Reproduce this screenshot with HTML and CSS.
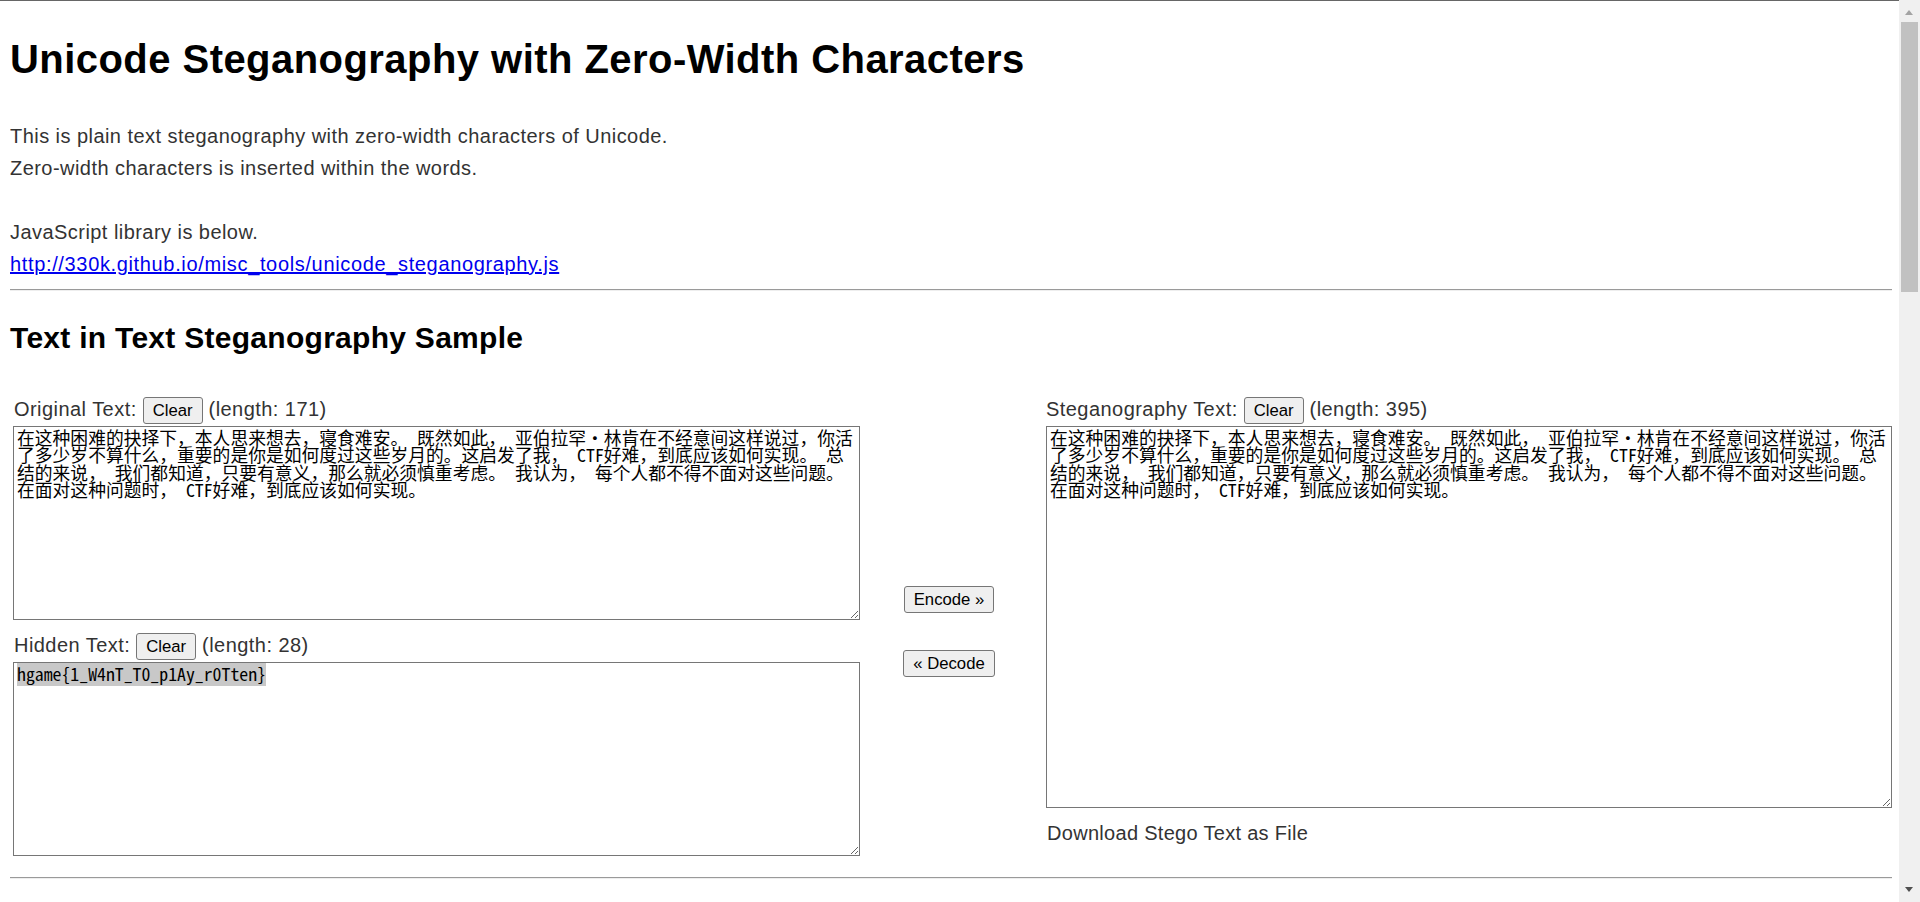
FILE: index.html
```html
<!DOCTYPE html>
<html lang="en">
<head>
<meta charset="utf-8">
<title>Unicode Steganography with Zero-Width Characters</title>
<link rel="stylesheet" href="styles.css">
</head>
<body>
<h1 class="title">Unicode Steganography with Zero-Width Characters</h1>
<p class="intro">This is plain text steganography with zero-width characters of Unicode.<br>Zero-width characters is inserted within the words.<br><br>JavaScript library is below.<br><a class="lib-link" href="http://330k.github.io/misc_tools/unicode_steganography.js">http://330k.github.io/misc_tools/unicode_steganography.js</a></p>
<hr class="rule">
<h2 class="section-title">Text in Text Steganography Sample</h2>
<div class="stego">
  <div class="cell cell-original">
    <div class="label-row"><span class="label">Original Text:</span><button class="btn btn-clear" type="button">Clear</button><span class="label">(length: 171)</span></div>
    <textarea class="ta ta-short" id="original">在这种困难的抉择下，本人思来想去，寝食难安。 既然如此， 亚伯拉罕·林肯在不经意间这样说过，你活了多少岁不算什么，重要的是你是如何度过这些岁月的。这启发了我， CTF好难，到底应该如何实现。 总结的来说， 我们都知道，只要有意义，那么就必须慎重考虑。 我认为， 每个人都不得不面对这些问题。 在面对这种问题时， CTF好难，到底应该如何实现。</textarea>
  </div>
  <div class="cell cell-actions">
    <button class="btn" type="button">Encode »</button>
    <button class="btn" type="button">« Decode</button>
  </div>
  <div class="cell cell-stego">
    <div class="label-row label-row-right"><span class="label">Steganography Text:</span><button class="btn btn-clear" type="button">Clear</button><span class="label">(length: 395)</span></div>
    <textarea class="ta ta-tall" id="stego">在这种困难的抉择下，本人思来想去，寝食难安。 既然如此， 亚伯拉罕·林肯在不经意间这样说过，你活了多少岁不算什么，重要的是你是如何度过这些岁月的。这启发了我， CTF好难，到底应该如何实现。 总结的来说， 我们都知道，只要有意义，那么就必须慎重考虑。 我认为， 每个人都不得不面对这些问题。 在面对这种问题时， CTF好难，到底应该如何实现。</textarea>
    <div class="download">Download Stego Text as File</div>
  </div>
  <div class="cell cell-hidden">
    <div class="label-row"><span class="label">Hidden Text:</span><button class="btn btn-clear" type="button">Clear</button><span class="label">(length: 28)</span></div>
    <textarea class="ta ta-short" id="hidden">hgame{1_W4nT_T0_p1Ay_r0Tten}</textarea>
  </div>
</div>
<hr class="rule rule-bottom">
<div class="scrollbar" aria-hidden="true">
  <span class="sb-up"></span>
  <span class="sb-thumb"></span>
  <span class="sb-down"></span>
</div>
<script src="script.js"></script>
</body>
</html>
```

FILE: styles.css
```css
html {
  border-top: 1px solid #666;
  overflow: hidden;
  background: #fff;
}

body {
  margin: 0 28px 0 10px;
  font-family: "Liberation Sans", Arial, sans-serif;
  font-size: 20px;
  line-height: 32px;
  color: #333;
  letter-spacing: 0.45px;
}

.title {
  font-size: 40px;
  line-height: 48px;
  font-weight: bold;
  color: #000;
  letter-spacing: 0.45px;
  margin: 34px 0 37px;
}

.intro {
  margin: 0;
}

.lib-link {
  color: #0000ee;
  text-decoration: underline;
  letter-spacing: 0.65px;
}

.rule {
  margin: 9px 0 0;
  height: 0;
  border: 0;
  border-top: 1px solid #9a9a9a;
  border-bottom: 1px solid #eeeeee;
}

.rule-bottom {
  margin-top: 21px;
}

.section-title {
  font-size: 30px;
  line-height: 36px;
  font-weight: bold;
  color: #000;
  letter-spacing: 0.28px;
  margin: 29px 0 0;
}

.stego {
  display: grid;
  grid-template-columns: 847px 186px 846px;
  margin: 40px 0 0 3px;
}

.cell-original {
  grid-column: 1;
  grid-row: 1;
}

.cell-hidden {
  grid-column: 1;
  grid-row: 2;
  margin-top: 12px;
}

.cell-actions {
  grid-column: 2;
  grid-row: 1 / 3;
  display: flex;
  flex-direction: column;
  align-items: center;
  justify-content: center;
  gap: 37px;
  padding: 10px 8px 0 0;
}

.cell-stego {
  grid-column: 3;
  grid-row: 1 / 3;
}

.label-row {
  display: flex;
  align-items: center;
  gap: 6px;
  height: 28px;
  padding-left: 1px;
}

.label-row-right {
  padding-left: 0;
}

.label {
  line-height: 26px;
  padding-bottom: 2px;
  white-space: nowrap;
}

.btn {
  box-sizing: border-box;
  height: 27px;
  margin: 0;
  padding: 0 9px;
  border: 1px solid #767676;
  border-radius: 3px;
  background: #efefef;
  color: #000;
  font-family: "Liberation Sans", Arial, sans-serif;
  font-size: 16.7px;
  line-height: 25px;
  letter-spacing: 0;
}

.btn-clear {
  min-width: 59px;
}

.ta {
  display: block;
  box-sizing: border-box;
  width: 100%;
  margin: 2px 0 0;
  padding: 2px 3px;
  border: 1px solid #767676;
  border-radius: 0;
  background: #fff;
  color: #000;
  font-family: "Noto Sans Mono CJK SC", "Noto Sans CJK SC", monospace;
  font-size: 17.8px;
  line-height: 17.3px;
  letter-spacing: 0;
  resize: both;
  overflow: hidden;
}

.ta:focus {
  outline: none;
}

.ta::selection {
  background: #c8c8c8;
  color: #000;
}

.ta-short {
  height: 194px;
}

.ta-tall {
  height: 382px;
}

.download {
  margin-top: 9px;
  padding-left: 1px;
  letter-spacing: 0.3px;
}

.scrollbar {
  position: fixed;
  top: 0;
  right: 0;
  bottom: 0;
  width: 21px;
  background: #f0f0f0;
}

.sb-up,
.sb-down {
  position: absolute;
  left: 6px;
  width: 0;
  height: 0;
  border-left: 4.5px solid transparent;
  border-right: 4.5px solid transparent;
}

.sb-up {
  top: 10px;
  border-bottom: 5px solid #a3a3a3;
}

.sb-down {
  bottom: 10px;
  border-top: 5px solid #505050;
}

.sb-thumb {
  position: absolute;
  left: 2px;
  top: 22px;
  width: 17px;
  height: 270px;
  background: #c1c1c1;
}
```

FILE: script.js
```js
var hidden = document.getElementById('hidden');
hidden.focus();
hidden.setSelectionRange(0, hidden.value.length);
```
